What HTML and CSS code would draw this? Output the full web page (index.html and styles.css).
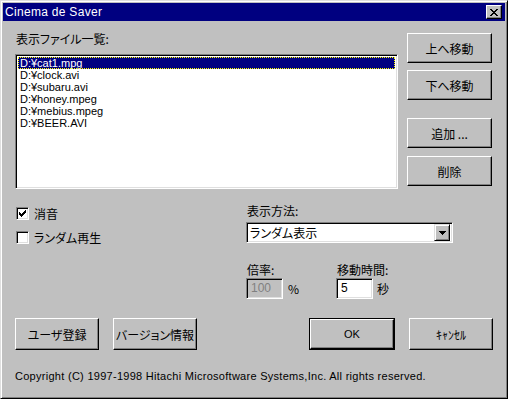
FILE: index.html
```html
<!DOCTYPE html>
<html lang="ja">
<head>
<meta charset="utf-8">
<link rel="stylesheet" href="styles.css">
</head>
<body>
<div class="window">
  <div class="titlebar">
    <span class="title-text">Cinema de Saver</span>
    <div class="close">
      <svg width="8" height="7" viewBox="0 0 8 7" shape-rendering="crispEdges"><path d="M0 0h2v1h-2zM6 0h2v1h-2zM1 1h2v1h-2zM5 1h2v1h-2zM2 2h4v1h-4zM3 3h2v1h-2zM2 4h4v1h-4zM1 5h2v1h-2zM5 5h2v1h-2zM0 6h2v1h-2zM6 6h2v1h-2z" fill="#000"/></svg>
    </div>
  </div>
  <div class="client">
    <div class="top">
      <div class="list-col">
        <div class="label">表示ファイル一覧:</div>
        <div class="listbox sunken">
          <div class="item selected">D:¥cat1.mpg</div>
          <div class="item">D:¥clock.avi</div>
          <div class="item">D:¥subaru.avi</div>
          <div class="item">D:¥honey.mpeg</div>
          <div class="item">D:¥mebius.mpeg</div>
          <div class="item">D:¥BEER.AVI</div>
        </div>
      </div>
      <div class="btn-col">
        <div class="btn">上へ移動</div>
        <div class="btn b-down">下へ移動</div>
        <div class="btn b-add">追加 ...</div>
        <div class="btn b-del">削除</div>
      </div>
    </div>
    <div class="mid">
      <div class="checks">
        <div class="check-row">
          <div class="cbox sunken">
            <svg width="9" height="9" viewBox="2 2 9 9" shape-rendering="crispEdges"><path d="M3 5h1v3h-1zM4 6h1v3h-1zM5 7h1v3h-1zM6 6h1v3h-1zM7 5h1v3h-1zM8 4h1v3h-1zM9 3h1v3h-1z" fill="#000"/></svg>
          </div>
          <span class="check-label">消音</span>
        </div>
        <div class="check-row second">
          <div class="cbox sunken"></div>
          <span class="check-label">ランダム再生</span>
        </div>
      </div>
      <div class="opts">
        <div class="label">表示方法:</div>
        <div class="combo sunken">
          <span class="combo-text">ランダム表示</span>
          <div class="drop">
            <svg width="7" height="4" viewBox="0 0 7 4" shape-rendering="crispEdges"><path d="M0 0h7v1h-1v1h-1v1h-1v1h-1v-1h-1v-1h-1v-1h-1z" fill="#000"/></svg>
          </div>
        </div>
        <div class="fields">
          <div class="field g1">
            <div class="label">倍率:</div>
            <div class="field-row">
              <div class="edit sunken disabled">100</div>
              <span class="unit u1">%</span>
            </div>
          </div>
          <div class="field">
            <div class="label">移動時間:</div>
            <div class="field-row">
              <div class="edit sunken">5</div>
              <span class="unit u2">秒</span>
            </div>
          </div>
        </div>
      </div>
    </div>
    <div class="bottom">
      <div class="btn wide">ユーザ登録</div>
      <div class="btn wide b-ver">バージョン情報</div>
      <div class="default-wrap"><div class="btn ok">OK</div></div>
      <div class="btn wide b-cancel">ｷｬﾝｾﾙ</div>
    </div>
    <div class="copyright">Copyright (C) 1997-1998 Hitachi Microsoftware Systems,Inc. All rights reserved.</div>
  </div>
</div>
</body>
</html>
```

FILE: styles.css
```css
html, body {
  margin: 0;
  padding: 0;
  background: #c0c0c0;
}

body {
  font-family: "Noto Sans CJK JP", "DejaVu Sans", sans-serif;
  font-size: 12px;
  font-feature-settings: "palt";
  color: #000;
}

.window {
  width: 508px;
  height: 399px;
  box-sizing: border-box;
  background: #c0c0c0;
  border: 1px solid;
  border-color: #dfdfdf #000 #000 #dfdfdf;
  box-shadow: inset 1px 1px #fff, inset -1px -1px #808080;
  padding: 2px;
  display: flex;
  flex-direction: column;
}

.titlebar {
  height: 18px;
  flex: none;
  background: #000080;
  color: #fff;
  display: flex;
  align-items: center;
  justify-content: space-between;
  padding-left: 2px;
}

.title-text {
  font-family: "Liberation Sans", sans-serif;
  font-size: 12px;
  line-height: 14px;
  letter-spacing: 0.3px;
}

.close {
  width: 16px;
  height: 14px;
  margin-right: 3px;
  box-sizing: border-box;
  background: #c0c0c0;
  border: 1px solid;
  border-color: #fff #000 #000 #fff;
  box-shadow: inset -1px -1px #808080;
  display: flex;
  align-items: center;
  justify-content: center;
}

.close svg { display: block; }

.client {
  flex: 1;
  padding: 12px 0 0 12px;
  display: flex;
  flex-direction: column;
}

.sunken {
  box-sizing: border-box;
  border: 1px solid;
  border-color: #808080 #fff #fff #808080;
  box-shadow: inset 1px 1px #000, inset -1px -1px #dfdfdf;
}

.label {
  line-height: 12px;
  height: 12px;
  white-space: nowrap;
}

/* top section */
.top {
  display: flex;
  height: 156px;
  flex: none;
}

.list-col {
  width: 383px;
  display: flex;
  flex-direction: column;
}

.list-col .label {
  margin-left: 1px;
}

.listbox {
  height: 135px;
  margin-top: 9px;
  background: #fff;
  padding: 2px;
  font-family: "Liberation Sans", sans-serif;
  font-size: 11px;
}

.item {
  height: 12px;
  line-height: 12px;
  padding-left: 2px;
  white-space: nowrap;
}

.item.selected {
  background: #000080;
  color: #fff;
  outline: 1px dotted #ffff00;
  outline-offset: -1px;
}

.btn-col {
  margin-left: 9px;
  width: 85px;
  display: flex;
  flex-direction: column;
}

.btn {
  height: 30px;
  box-sizing: border-box;
  background: #c0c0c0;
  border: 1px solid;
  border-color: #fff #000 #000 #fff;
  box-shadow: inset -1px -1px #808080;
  display: flex;
  align-items: center;
  justify-content: center;
  white-space: nowrap;
}

.b-down { margin-top: 7px; }
.b-add { margin-top: 18px; }
.b-del { margin-top: 8px; }

/* middle */
.mid {
  display: flex;
  height: 110px;
  flex: none;
}

.checks {
  width: 231px;
  padding-top: 18px;
  box-sizing: border-box;
}

.check-row {
  display: flex;
  align-items: center;
  height: 13px;
  margin-left: 1px;
}

.check-row.second { margin-top: 11px; }

.cbox {
  width: 13px;
  height: 13px;
  background: #fff;
  display: flex;
  align-items: center;
  justify-content: center;
}

.cbox svg { display: block; }

.check-label {
  margin-left: 5px;
  line-height: 12px;
}

.opts {
  padding-top: 16px;
  display: flex;
  flex-direction: column;
}

.opts > .label { margin-left: 1px; }

.combo {
  margin-top: 5px;
  width: 207px;
  height: 21px;
  background: #fff;
  display: flex;
  align-items: center;
  padding: 2px;
}

.combo-text {
  flex: 1;
  padding-left: 1px;
  line-height: 12px;
}

.drop {
  width: 16px;
  height: 17px;
  box-sizing: border-box;
  background: #c0c0c0;
  border: 1px solid;
  border-color: #dfdfdf #000 #000 #dfdfdf;
  box-shadow: inset 1px 1px #fff, inset -1px -1px #808080;
  display: flex;
  align-items: center;
  justify-content: center;
}

.drop svg { display: block; }

.fields {
  display: flex;
  margin-top: 21px;
}

.field .label { margin-left: 1px; }

.g1 { width: 90px; }

.field-row {
  display: flex;
  align-items: center;
  margin-top: 2px;
}

.edit {
  width: 37px;
  height: 21px;
  background: #fff;
  padding-left: 4px;
  line-height: 19px;
  font-family: "Liberation Sans", sans-serif;
  font-size: 12px;
}

.edit.disabled {
  background: #c0c0c0;
  color: #808080;
}

.unit { line-height: 12px; }
.u1 { margin-left: 5px; }
.u2 { margin-left: 4px; }

/* bottom */
.bottom {
  display: flex;
  margin-top: 19px;
  flex: none;
}

.bottom .btn {
  height: 32px;
}

.wide { width: 84px; }

.b-ver { margin-left: 14px; }

.default-wrap {
  margin-left: 112px;
  width: 86px;
  height: 32px;
  box-sizing: border-box;
  border: 1px solid #000;
  display: flex;
}

.default-wrap .btn.ok {
  width: 84px;
  height: 30px;
}

.ok {
  font-family: "Liberation Sans", sans-serif;
  font-size: 11px;
}

.b-cancel { margin-left: 14px; }

.copyright {
  margin-top: 19px;
  font-family: "Liberation Sans", sans-serif;
  font-size: 11px;
  line-height: 14px;
  letter-spacing: 0.28px;
  white-space: nowrap;
}
```
